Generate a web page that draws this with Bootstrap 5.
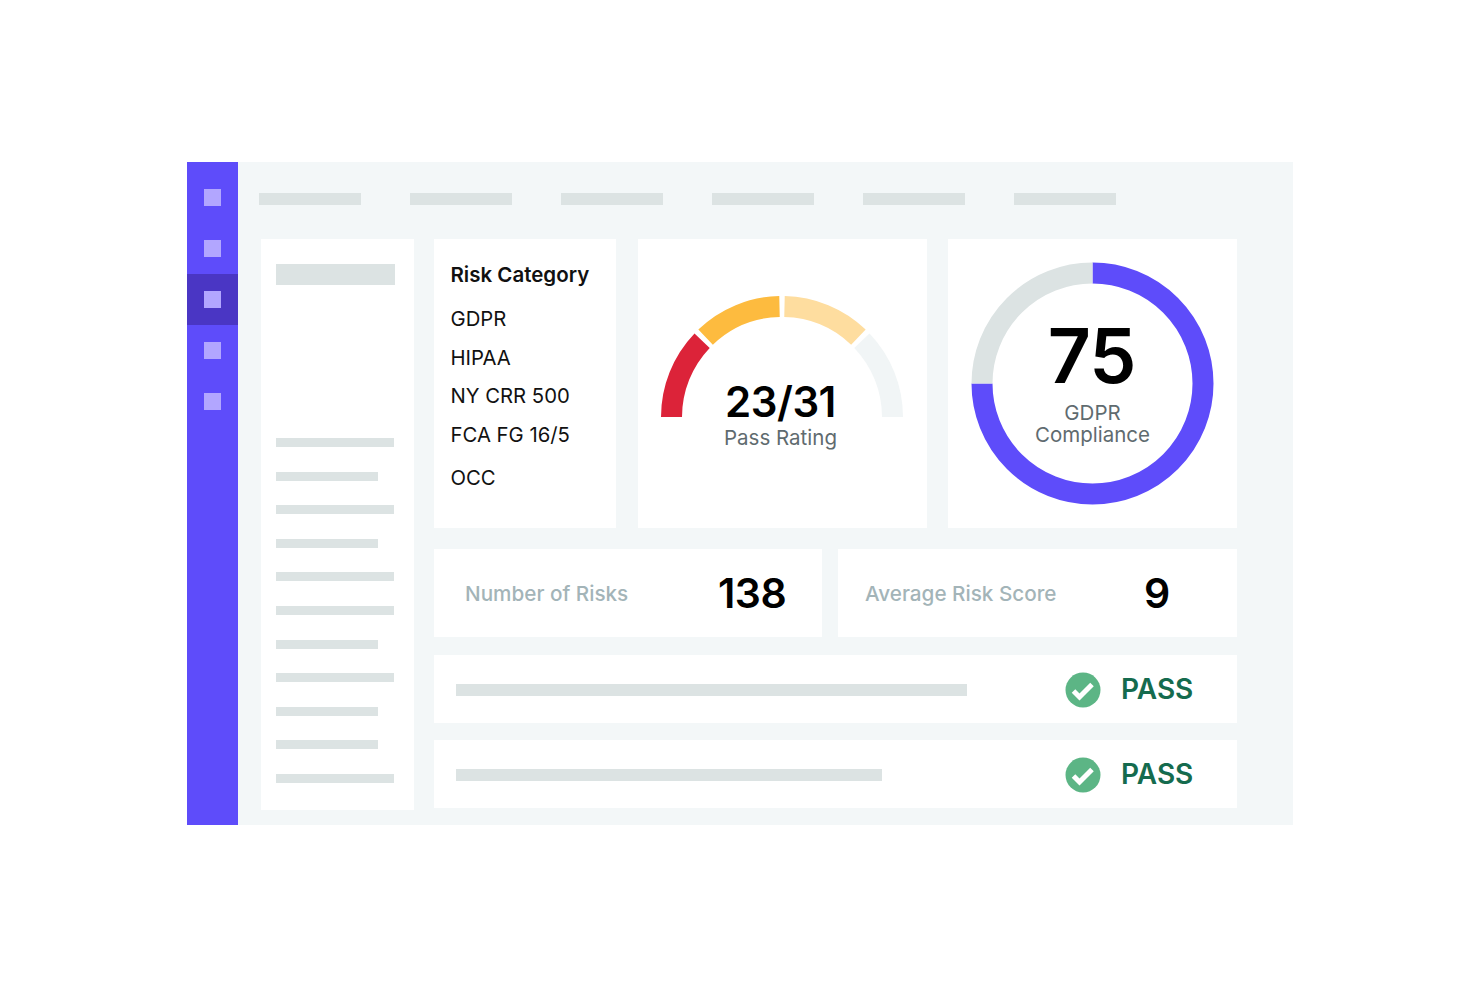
<!DOCTYPE html>
<html lang="en">
<head>
  <meta charset="UTF-8">
  <title>Risk Dashboard</title>
  <meta name="viewport" content="width=device-width, initial-scale=1">
  <link href="https://cdn.jsdelivr.net/npm/bootstrap@5.3.0/dist/css/bootstrap.min.css" rel="stylesheet">
  <style>
    body { background: #fff; font-family: Inter, "Liberation Sans", sans-serif; color: #111; }
    .frame { width: 1106px; height: 663px; margin: 162px auto 0; background: #f3f7f8; }

    .rail { width: 51px; background: #5e4cfa; padding-top: 10px; }
    .rail-item { height: 51px; }
    .rail-item.on { background: #4a36c4; }
    .rail-dot { width: 17px; height: 17px; background: #b2a6ff; margin-top: -1px; }

    .work { padding: 31px 0 0 21px; }
    .ph { background: #dce3e3; }
    .top-ph { width: 102px; height: 12px; }
    .top-row { gap: 49px; }
    .body-row { margin: 34px 0 0 2px; gap: 20px; }
    .tile { border: 0; border-radius: 0; background: #fff; }

    .side { width: 153px; height: 571px; padding: 25px 19px 0 15px; }
    .side-head { height: 21px; width: 119px; }
    .side-lines { margin-top: 153px; gap: 24.6px; }
    .side-line { height: 9px; width: 118px; }
    .side-line.short { width: 102px; }

    .wide { width: 803px; }
    .top-cards { height: 289px; gap: 21.5px; }
    .cat { width: 182px; padding: 24px 0 0 16.5px; font-size: 20.3px; }
    .cat-title { font-weight: 600; font-size: 20.5px; line-height: 24px; margin-bottom: 20px; }
    .cat-item { line-height: 24px; margin-bottom: 14.7px; }
    .cat-item.last { margin-top: 4px; }
    .dial { width: 289px; }
    .dial svg { display: block; }
    .dial-text { left: 0; right: 0; text-align: center; }
    .gauge-text { right: 3px; }
    .score { top: 139px; font-size: 42px; font-weight: 600; line-height: 48px; letter-spacing: -.5px; color: #000; }
    .sub { color: #5f6b6f; font-size: 20.5px; line-height: 22px; }
    .big { top: 75px; right: 2px; font-size: 75px; font-weight: 600; line-height: 84px; letter-spacing: -1px; color: #000; }

    .stat-row { margin-top: 21px; gap: 16px; }
    .stat { height: 88px; padding-top: 2px; }
    .stat-a { width: 388px; padding-left: 31px; }
    .stat-b { width: 399px; padding-left: 27px; }
    .stat-label { color: #a3b4b8; font-size: 20.7px; font-weight: 500; }
    .stat-num { font-size: 41px; font-weight: 600; letter-spacing: -.5px; color: #000; }
    .stat-a .stat-label { width: 253px; }
    .stat-b .stat-label { width: 279px; }

    .check-row { height: 68px; padding-left: 22px; }
    .check-ph { height: 12px; margin-top: 2px; }
    .check-slot { width: 1px; flex-grow: 1; }
    .pass-box { width: 172px; gap: 20px; }
    .pass-box svg { margin-top: 2px; }
    .pass { color: #156b4e; font-size: 28px; font-weight: 600; line-height: 1; }
  </style>
</head>
<body>

  <div class="frame d-flex">
    <!-- icon rail -->
    <div class="rail flex-shrink-0">
      <div class="rail-item d-flex align-items-center justify-content-center"><div class="rail-dot"></div></div>
      <div class="rail-item d-flex align-items-center justify-content-center"><div class="rail-dot"></div></div>
      <div class="rail-item on d-flex align-items-center justify-content-center"><div class="rail-dot"></div></div>
      <div class="rail-item d-flex align-items-center justify-content-center"><div class="rail-dot"></div></div>
      <div class="rail-item d-flex align-items-center justify-content-center"><div class="rail-dot"></div></div>
    </div>

    <div class="work flex-grow-1">
      <div class="top-row d-flex">
        <div class="ph top-ph"></div>
        <div class="ph top-ph"></div>
        <div class="ph top-ph"></div>
        <div class="ph top-ph"></div>
        <div class="ph top-ph"></div>
        <div class="ph top-ph"></div>
      </div>

      <div class="body-row d-flex">
        <!-- left list -->
        <div class="card tile side">
          <div class="ph side-head"></div>
          <div class="side-lines d-flex flex-column">
            <div class="ph side-line"></div>
            <div class="ph side-line short"></div>
            <div class="ph side-line"></div>
            <div class="ph side-line short"></div>
            <div class="ph side-line"></div>
            <div class="ph side-line"></div>
            <div class="ph side-line short"></div>
            <div class="ph side-line"></div>
            <div class="ph side-line short"></div>
            <div class="ph side-line short"></div>
            <div class="ph side-line"></div>
          </div>
        </div>

        <div class="wide">
          <div class="top-cards d-flex">
            <div class="card tile cat">
              <div class="cat-title">Risk Category</div>
              <div class="cat-item">GDPR</div>
              <div class="cat-item">HIPAA</div>
              <div class="cat-item">NY CRR 500</div>
              <div class="cat-item">FCA FG 16/5</div>
              <div class="cat-item last">OCC</div>
            </div>

            <div class="card tile dial position-relative">
              <svg width="289" height="289" viewBox="0 0 289 289" fill="none" stroke-width="21">
                <path d="M33.5 178 A110.5 110.5 0 0 1 64.1 101.7" stroke="#dc2339"/>
                <path d="M67.6 98.1 A110.5 110.5 0 0 1 141.5 67.5" stroke="#fdbb3f"/>
                <path d="M146.5 67.5 A110.5 110.5 0 0 1 220.4 98.1" stroke="#fedd9f"/>
                <path d="M223.9 101.7 A110.5 110.5 0 0 1 254.5 178" stroke="#f1f5f6"/>
              </svg>
              <div class="dial-text gauge-text score position-absolute">23/31</div>
              <div class="dial-text gauge-text sub position-absolute" style="top:188px">Pass Rating</div>
            </div>

            <div class="card tile dial position-relative">
              <svg width="289" height="289" viewBox="0 0 289 289" fill="none" stroke-width="21">
                <path d="M144.5 34 A110.5 110.5 0 1 1 34 144.5" stroke="#5e4cfa"/>
                <path d="M34 144.5 A110.5 110.5 0 0 1 144.5 34" stroke="#dce3e3"/>
              </svg>
              <div class="dial-text big position-absolute">75</div>
              <div class="dial-text sub position-absolute" style="top:163px">GDPR<br>Compliance</div>
            </div>
          </div>

          <div class="stat-row d-flex">
            <div class="card tile stat stat-a flex-row align-items-center">
              <div class="stat-label">Number of Risks</div>
              <div class="stat-num">138</div>
            </div>
            <div class="card tile stat stat-b flex-row align-items-center">
              <div class="stat-label">Average Risk Score</div>
              <div class="stat-num">9</div>
            </div>
          </div>

          <div class="card tile check-row flex-row align-items-center" style="margin-top:18px">
            <div class="check-slot"><div class="ph check-ph" style="width:511px"></div></div>
            <div class="pass-box d-flex align-items-center">
              <svg width="36" height="36" viewBox="0 0 36 36"><circle cx="18" cy="18" r="17.5" fill="#5cb585"/><path d="M8.5 19l6 6 12.5-12.5" fill="none" stroke="#fff" stroke-width="5"/></svg>
              <span class="pass">PASS</span>
            </div>
          </div>
          <div class="card tile check-row flex-row align-items-center" style="margin-top:17px">
            <div class="check-slot"><div class="ph check-ph" style="width:426px"></div></div>
            <div class="pass-box d-flex align-items-center">
              <svg width="36" height="36" viewBox="0 0 36 36"><circle cx="18" cy="18" r="17.5" fill="#5cb585"/><path d="M8.5 19l6 6 12.5-12.5" fill="none" stroke="#fff" stroke-width="5"/></svg>
              <span class="pass">PASS</span>
            </div>
          </div>
        </div>
      </div>
    </div>
  </div>

  <script src="https://cdn.jsdelivr.net/npm/bootstrap@5.3.0/dist/js/bootstrap.bundle.min.js"></script>
</body>
</html>
